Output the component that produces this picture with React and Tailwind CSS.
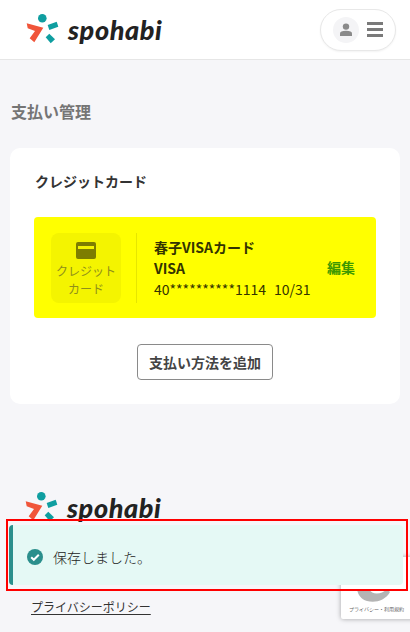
import React from 'react';

const Logo = () => (
  <div className="flex items-center">
    <svg width="36" height="32" viewBox="0 0 36 32" className="shrink-0">
      <polygon points="0.7,9.3 17.3,13.7 8.3,28.3 3.7,24.3 9,17 1.7,14.3" fill="#f0553a" />
      <circle cx="16.3" cy="4.3" r="4.3" fill="#0f9ea0" />
      <polygon points="21.7,11 30.7,7.7 32.3,12.7 23.3,16" fill="#0f9ea0" />
      <polygon points="19.7,23.3 23.3,19.7 29,25.3 24.7,29.3" fill="#0f9ea0" />
    </svg>
    <span className="ml-[6px] font-['Lato',sans-serif] italic font-black text-[27px] leading-[32px] tracking-[0.6px] text-[#222222]">spohabi</span>
  </div>
);

const App = () => {
  return (
    <div className="relative h-[632px] overflow-hidden bg-[#f6f6f9] font-['Noto_Sans_CJK_JP','Noto_Sans',sans-serif] text-[#333333]">
      {/* header */}
      <header className="h-[60px] flex items-center justify-between pl-[26px] pr-[14px] bg-white border-b border-[#e6e6e6]">
        <Logo />
        <button className="w-[76px] h-[42px] rounded-full bg-white border border-[#e8e8e8] shadow-xs flex items-center justify-center gap-[8px]">
          <span className="w-[26px] h-[26px] rounded-full bg-[#f4f4f6] flex items-center justify-center">
            <svg width="14" height="14" viewBox="0 0 14 14">
              <circle cx="7" cy="3.6" r="3.2" fill="#8a8a8a" />
              <path d="M1 13v-2.4C1 8.8 3 7.8 7 7.8s6 1 6 2.8V13z" fill="#8a8a8a" />
            </svg>
          </span>
          <span className="w-[16px] flex flex-col gap-[3.5px]">
            <span className="h-[2.5px] bg-[#7a7a7a]" />
            <span className="h-[2.5px] bg-[#7a7a7a]" />
            <span className="h-[2.5px] bg-[#7a7a7a]" />
          </span>
        </button>
      </header>

      {/* main */}
      <main className="pl-[10px] pr-[10px] pt-[38px]">
        <h1 className="pl-px text-[16px] leading-[26px] font-bold text-[#757575]">支払い管理</h1>
        <section className="mt-[24px] h-[256px] rounded-[10px] bg-white px-[24px] pt-[21px]">
          <h2 className="pl-px text-[14px] leading-[24px] font-bold">クレジットカード</h2>
          <div className="mt-[24px] h-[101px] rounded-[4px] bg-[#ffff00] flex items-center pl-[17px] pr-[21px]">
            <div className="w-[70px] h-[70px] rounded-[8px] bg-[#f4f400] flex flex-col items-center pt-[9px] text-[#8f8f1a]">
              <svg width="20" height="17" viewBox="0 0 20 17">
                <rect width="20" height="17" rx="2" fill="#7d7d00" />
                <rect x="2" y="4" width="16" height="3" fill="#f4f400" />
              </svg>
              <span className="mt-[3px] text-[12px] leading-[18px] text-center">クレジット<br />カード</span>
            </div>
            <div className="ml-[15px] w-px h-[70px] bg-[#e6e600]" />
            <div className="ml-[17px] flex-1 pt-[2px] text-[14px] leading-[21px] text-[#333300]">
              <p className="font-bold">春子VISAカード</p>
              <p className="font-bold">VISA</p>
              <p>40**********1114<span className="ml-[8px]">10/31</span></p>
            </div>
            <span className="text-[14px] font-bold text-[#3d9900]">編集</span>
          </div>
          <div className="mt-[26px] flex justify-center">
            <button className="w-[136px] h-[36px] rounded-[4px] border border-[#8a8a8a] bg-white text-[14px] font-bold text-[#444444]">支払い方法を追加</button>
          </div>
        </section>
      </main>

      {/* footer */}
      <footer className="pl-[25px] pt-[88px]">
        <Logo />
        <a className="block ml-[6px] mt-[75px] w-fit text-[12px] leading-[16px] underline underline-offset-2 text-[#333333]">プライバシーポリシー</a>
      </footer>

      {/* recaptcha badge */}
      <div className="absolute left-[341px] top-[557px] w-[256px] h-[62px] rounded-[2px] bg-white shadow-[0_0_5px_rgba(0,0,0,0.35)]">
        <svg width="40" height="24" viewBox="0 0 40 24" className="absolute left-[16px] top-[26px]">
          <path d="M0 6h12c3 6 12 6 18 0l3 3C28 18 18 20 10 18 4 16 1 12 0 6z" fill="#b4b4b4" />
        </svg>
        <span className="absolute left-[8px] top-[46px] text-[5px] leading-[12px] text-[#666666] whitespace-nowrap">プライバシー・利用規約</span>
      </div>

      {/* toast */}
      <div className="absolute left-[6px] top-[519px] w-[402px] h-[72px] border-2 border-[#ff0000] pl-[1px] pr-[3px] py-[4px]">
        <div className="h-full rounded-[4px] bg-[#e5f9f5] border-l-4 border-[#2b8f8c] flex items-center pl-[14px] pt-[4px]">
          <svg width="16" height="16" viewBox="0 0 16 16" className="shrink-0">
            <circle cx="8" cy="8" r="8" fill="#2b8f8c" />
            <path d="M4.2 8.2l2.6 2.6 5-5" fill="none" stroke="#ffffff" strokeWidth="2" />
          </svg>
          <span className="ml-[10px] text-[14px] text-[#222222] font-light">保存しました。</span>
        </div>
      </div>
    </div>
  );
};

export default App;
